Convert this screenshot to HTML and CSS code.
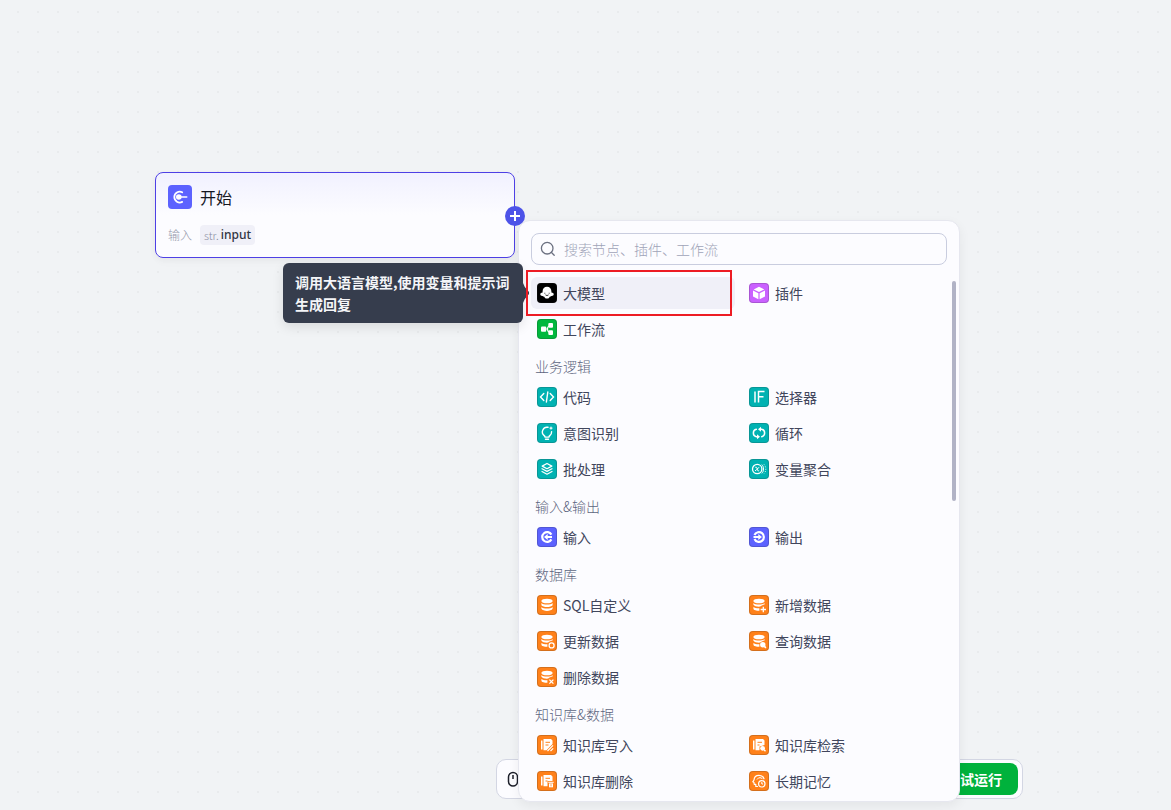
FILE: index.html
```html
<!DOCTYPE html>
<html lang="zh-CN">
<head>
<meta charset="utf-8">
<title>工作流</title>
<link rel="stylesheet" href="styles.css">
</head>
<body>
<svg class="defs" aria-hidden="true">
  <symbol id="db" viewBox="0 0 20 20">
    <ellipse cx="10" cy="6" rx="5.6" ry="2.3" fill="#fff"/>
    <path d="M4.4 8c1.600 2 9.600 2 11.200 0v2.200c-1.600 2.400-9.600 2.400-11.200 0zM4.400 12c1.600 2 9.600 2 11.200 0v1.800c-1.600 2.800-9.600 2.800-11.200 0z" fill="#fff"/>
  </symbol>
  <symbol id="db-part" viewBox="0 0 20 20">
    <ellipse cx="10" cy="6" rx="5.6" ry="2.3" fill="#fff"/>
    <path d="M4.400 8c1.600 2 9.600 2 11.200 0v1.600c-1.500.4-3.500.9-4.400 2-2.800.2-6-.3-6.800-1.800zM4.400 12c1 .9 3.600 1.300 6 1.200v2.600c-2.800 0-6-.6-6-2.400z" fill="#fff"/>
  </symbol>
</svg>
<main class="canvas">
  <section class="node">
    <header class="node-head">
      <span class="icon icon-large indigo"><svg viewBox="0 0 24 24"><path d="M14.200 16.900A5.400 5.400 0 1 1 14.200 7.300" fill="none" stroke="#fff" stroke-width="1.800" stroke-linecap="round"/><circle cx="10.800" cy="12" r="2.800" fill="#fff"/><path d="M11 12h7.700" stroke="#fff" stroke-width="1.600" stroke-linecap="round"/></svg></span>
      <h1 class="node-title">开始</h1>
    </header>
    <div class="node-row">
      <span class="node-label">输入</span>
      <span class="tag"><span class="tag-type">str.</span><span class="tag-name">input</span></span>
    </div>
    <button class="port" aria-label="添加节点"><svg viewBox="0 0 20 20"><path d="M10 5v10M5 10h10" stroke="#fff" stroke-width="2"/></svg></button>
  </section>

  <div class="toolbar">
    <button class="mouse-button" aria-label="鼠标"><svg viewBox="0 0 16 20"><rect x="3.500" y="3.500" width="9" height="13.500" rx="4.500" fill="none" stroke="#1c1f2a" stroke-width="1.500"/><path d="M8 6v4" stroke="#1c1f2a" stroke-width="1.500"/></svg></button>
    <button class="run-button">试运行</button>
  </div>

  <section class="panel">
    <label class="search">
      <svg viewBox="0 0 16 16"><circle cx="7.200" cy="7.200" r="5.800" fill="none" stroke="#6b7080" stroke-width="1.300"/><path d="M11.500 11.500l2.700 2.700" stroke="#6b7080" stroke-width="1.300" stroke-linecap="round"/></svg>
      <input type="text" placeholder="搜索节点、插件、工作流" aria-label="搜索">
    </label>
    <div class="list">
      <div class="grid">
        <button class="item active"><span class="icon black"><svg viewBox="0 0 20 20"><path d="M10 3.800c2.600 0 4.400 1.900 4.400 4.400v1.300c1.300.1 2.300.8 2.300 1.800s-1 1.700-2.300 1.600c-.5.500-1 .7-1.700.8-.4 1.200-1.300 1.900-2.700 1.900s-2.300-.7-2.700-1.900c-.7-.1-1.200-.3-1.700-.8-1.300.1-2.300-.6-2.300-1.600s1-1.700 2.300-1.800V8.200c0-2.500 1.800-4.400 4.400-4.400z" fill="#fff"/><path d="M7.800 9.800v.8M12.200 9.800v.8M8.500 11.900c.8.700 2.200.7 3 0" fill="none" stroke="#000" stroke-width=".9"/></svg></span>大模型</button>
        <button class="item"><span class="icon purple"><svg viewBox="0 0 20 20"><path d="M10 3.800l5.300 2.600L10 9 4.700 6.400zM4 7.500l5.400 2.700v6L4 13.500zM16 7.500l-5.400 2.700v6l5.400-2.700z" fill="#fff"/></svg></span>插件</button>
        <button class="item"><span class="icon green"><svg viewBox="0 0 20 20"><rect x="4" y="7.500" width="5.200" height="5.200" rx="1" fill="#fff"/><rect x="11.300" y="4" width="4.700" height="4.700" rx="1" fill="#fff"/><rect x="11.300" y="11.300" width="4.700" height="4.700" rx="1" fill="#fff"/><path d="M8 10h2.500M13 7c-2 0-2.500 1.200-2.500 3s.5 3.200 2.500 3.200" fill="none" stroke="#fff" stroke-width="1.100"/></svg></span>工作流</button>
      </div>
      <h2 class="group-title">业务逻辑</h2>
      <div class="grid">
        <button class="item"><span class="icon teal"><svg viewBox="0 0 20 20"><path d="M6.800 6.500L3.500 10l3.300 3.500M13.200 6.500l3.300 3.500-3.300 3.500M10.800 5l-1.400 10" fill="none" stroke="#fff" stroke-width="1.400" stroke-linecap="round"/></svg></span>代码</button>
        <button class="item"><span class="icon teal"><svg viewBox="0 0 20 20"><path d="M6 4.500v11M9.500 15.500v-11h6M9.500 9.700h5" fill="none" stroke="#fff" stroke-width="1.500"/></svg></span>选择器</button>
        <button class="item"><span class="icon teal"><svg viewBox="0 0 20 20"><path d="M11 4.300A4.700 4.700 0 0 0 7.200 12.600c.6.500.8 1 .9 1.500h3.800c.1-.5.300-1 .9-1.500a4.700 4.700 0 0 0 1.800-4M8.500 16.300h3" fill="none" stroke="#fff" stroke-width="1.400" stroke-linecap="round"/><path d="M14 3l.6 1.500 1.500.6-1.500.6-.6 1.500-.6-1.500-1.500-.6 1.500-.6z" fill="#fff"/></svg></span>意图识别</button>
        <button class="item"><span class="icon teal"><svg viewBox="0 0 20 20"><path d="M7.300 6.300a3.800 3.800 0 0 0 0 7.400h1.200M12.700 13.700a3.800 3.800 0 0 0 0-7.400h-1.200" fill="none" stroke="#fff" stroke-width="1.500" stroke-linecap="round"/><path d="M12 3.800v5L9 6.300zM8 11.200v5l3-2.500z" fill="#fff"/></svg></span>循环</button>
        <button class="item"><span class="icon teal"><svg viewBox="0 0 20 20"><path d="M10 4.500l4.800 2.600L10 9.700 5.200 7.100z" fill="none" stroke="#fff" stroke-width="1.300" stroke-linejoin="round"/><path d="M5 9.700l5 2.700 5-2.700M5 12.500l5 2.700 5-2.700" fill="none" stroke="#fff" stroke-width="1.200" stroke-linejoin="round" stroke-linecap="round"/></svg></span>批处理</button>
        <button class="item"><span class="icon teal"><svg viewBox="0 0 20 20"><circle cx="8.200" cy="10" r="4.700" fill="none" stroke="#fff" stroke-width="1.300"/><path d="M6.300 8.300c1.300-.4 1.600.2 1.900 1.700s.6 2.100 1.900 1.700M10.300 8.300c-1.300 0-2.700 3.400-4.200 3.400" fill="none" stroke="#fff" stroke-width="1"/><path d="M12.800 5.600c2.300 2.200 2.300 6.600 0 8.800" fill="none" stroke="#fff" stroke-width="1"/><path d="M15 5.400c2.400 2.400 2.400 6.800 0 9.200" fill="none" stroke="#fff" stroke-width=".9" stroke-dasharray="1 1.400"/></svg></span>变量聚合</button>
      </div>
      <h2 class="group-title">输入&amp;输出</h2>
      <div class="grid">
        <button class="item"><span class="icon indigo"><svg viewBox="0 0 20 20"><path d="M14.400 7.600a4.900 4.900 0 1 0 0 4.800" fill="none" stroke="#fff" stroke-width="2.200"/><path d="M7 10l3.700-3v2H15v2h-4.300v2z" fill="#fff"/></svg></span>输入</button>
        <button class="item"><span class="icon indigo"><svg viewBox="0 0 20 20"><path d="M5.500 8a4.900 4.900 0 1 1 0 4" fill="none" stroke="#fff" stroke-width="2.200"/><path d="M13 10L9.300 7v2H4.500v2h4.800v2z" fill="#fff"/></svg></span>输出</button>
      </div>
      <h2 class="group-title">数据库</h2>
      <div class="grid">
        <button class="item"><span class="icon orange"><svg viewBox="0 0 20 20"><use href="#db"/></svg></span>SQL自定义</button>
        <button class="item"><span class="icon orange"><svg viewBox="0 0 20 20"><use href="#db-part"/><path d="M14.300 11.800v5.400M11.600 14.500H17" stroke="#fff" stroke-width="1.300"/></svg></span>新增数据</button>
        <button class="item"><span class="icon orange"><svg viewBox="0 0 20 20"><use href="#db-part"/><circle cx="14.600" cy="14.400" r="2.500" fill="none" stroke="#fff" stroke-width="1.300"/></svg></span>更新数据</button>
        <button class="item"><span class="icon orange"><svg viewBox="0 0 20 20"><use href="#db-part"/><circle cx="13.800" cy="13.800" r="2.700" fill="#fff"/><path d="M15.400 15.400l1.500 1.500" stroke="#fff" stroke-width="1.500"/></svg></span>查询数据</button>
        <button class="item"><span class="icon orange"><svg viewBox="0 0 20 20"><use href="#db-part"/><path d="M12.400 12.600l4 4M16.400 12.600l-4 4" stroke="#fff" stroke-width="1.300"/></svg></span>删除数据</button>
      </div>
      <h2 class="group-title">知识库&amp;数据</h2>
      <div class="grid">
        <button class="item"><span class="icon orange"><svg viewBox="0 0 20 20"><path d="M4 5.500h1.500v9H4zM6.500 4h7.500l1.500 1.500V9l-6 6.200h-3z" fill="#fff"/><path d="M8.500 7.300h4.500M8.500 10h3" stroke="#ff811a" stroke-width="1"/><path d="M10.500 16l5.500-5.700M13.500 16l2.700-2.700" stroke="#fff" stroke-width="1.200"/></svg></span>知识库写入</button>
        <button class="item"><span class="icon orange"><svg viewBox="0 0 20 20"><path d="M4 5.500h1.500v9H4zM6.500 4h7.500l1.500 1.500V10l-5 1.500v3.700h-4z" fill="#fff"/><path d="M8.500 7.300h4.500M8.500 10h2" stroke="#ff811a" stroke-width="1"/><circle cx="13.600" cy="13.300" r="2.400" fill="#fff"/><path d="M15 14.700l1.500 1.500" stroke="#fff" stroke-width="1.400"/></svg></span>知识库检索</button>
        <button class="item"><span class="icon orange"><svg viewBox="0 0 20 20"><path d="M4 5.500h1.500v9H4zM6.500 4h7.500l1.500 1.500V10h-5v5.200h-4z" fill="#fff"/><path d="M8.500 7.300h4.500M8.500 10h2" stroke="#ff811a" stroke-width="1"/><path d="M11.300 11.300h5.400" stroke="#fff" stroke-width="1"/><path d="M12 12.400h4v3.900h-4z" fill="#fff"/><path d="M14 13.200v2.200" stroke="#ff811a" stroke-width=".8"/></svg></span>知识库删除</button>
        <button class="item"><span class="icon orange"><svg viewBox="0 0 20 20"><path d="M8.500 15.500H6.800v-2.200H5.200L5 11.500 3.800 10.800 5 9c.2-3 2.300-4.700 5-4.700 2.500 0 4.300 1.300 5 3.500" fill="none" stroke="#fff" stroke-width="1.200" stroke-linejoin="round" stroke-linecap="round"/><path d="M8 8.500l1.700-1.700h2.600l1 1.300" fill="none" stroke="#fff"/><circle cx="12.800" cy="12.800" r="3.200" fill="none" stroke="#fff" stroke-width="1.200"/><path d="M12.800 11v2h1.300" fill="none" stroke="#fff"/></svg></span>长期记忆</button>
      </div>
      <span class="scroll-thumb"></span>
    </div>
  </section>

  <div class="tooltip" role="tooltip">调用大语言模型,使用变量和提示词生成回复</div>
  <div class="highlight"></div>
</main>
</body>
</html>
```
FILE: styles.css
```css
* { box-sizing: border-box; }
body {
  margin: 0;
  font-family: "Noto Sans CJK SC", "Noto Sans", sans-serif;
  font-size: 14px;
  color: #41465c;
}
button { border: 0; padding: 0; background: none; font: inherit; color: inherit; }
svg { display: block; width: 100%; height: 100%; }
.defs { position: absolute; width: 0; height: 0; }

.canvas {
  position: relative;
  height: 100vh;
  overflow: hidden;
  background-color: #f1f3f5;
  background-image: radial-gradient(circle, #e9ebed 1px, transparent 1px);
  background-size: 20px 20px;
  background-position: 8px 2px;
}

.node {
  position: absolute;
  left: 155px;
  top: 172px;
  width: 360px;
  padding: 12px;
  border: 1px solid #4e40e5;
  border-radius: 8px;
  background: linear-gradient(#f1f1ff, #fcfcff 42px);
  box-shadow: 0 2px 6px rgba(0, 0, 0, .04), 0 4px 12px rgba(0, 0, 0, .02);
}
.node-head { display: flex; align-items: center; gap: 8px; }
.node-title { margin: 0; font-size: 16px; line-height: 24px; font-weight: 400; color: #15171f; }
.node-row { display: flex; align-items: center; gap: 8px; margin-top: 16px; font-size: 12px; line-height: 20px; }
.node-label { font-weight: 300; color: #9599ab; }
.tag { display: flex; gap: 2px; padding: 0 4px; border-radius: 4px; background: #f0f0f8; }
.tag-type { font-size: 11px; font-weight: 300; color: #888ca0; }
.tag-name { font-family: "Noto Sans", sans-serif; font-weight: 500; color: #303442; }
.port {
  position: absolute;
  right: -11px;
  top: 33px;
  width: 20px;
  height: 20px;
  border-radius: 50%;
  background: #4d53e8;
}

.icon { flex: none; width: 20px; height: 20px; border-radius: 4px; box-shadow: inset 0 0 0 1px rgba(40, 40, 40, .2); }
.icon-large { width: 24px; height: 24px; box-shadow: none; }
.indigo { background: #5c62ff; }
.black { background: #000; }
.purple { background: #ca61ff; }
.green { background: #00b83e; }
.teal { background: #00b2b2; }
.orange { background: #ff811a; }

.toolbar {
  position: absolute;
  left: 496px;
  bottom: 11px;
  width: 527px;
  display: flex;
  align-items: center;
  justify-content: space-between;
  padding: 3px 4px;
  border: 1px solid #d3d6e3;
  border-radius: 10px;
  background: #fcfcff;
}
.mouse-button { width: 24px; height: 24px; padding: 2px 4px; }
.run-button {
  padding: 0 16px;
  border-radius: 8px;
  line-height: 32px;
  font-weight: 600;
  color: #fff;
  background: #00b23c;
}

.panel {
  position: absolute;
  left: 518px;
  top: 220px;
  bottom: 8px;
  width: 442px;
  display: flex;
  flex-direction: column;
  gap: 12px;
  padding: 12px 12px 0;
  border: 1px solid #e6e7ef;
  border-radius: 12px;
  background: #fcfcff;
  box-shadow: 0 4px 12px rgba(0, 0, 0, .06);
}
.search {
  display: flex;
  align-items: center;
  gap: 8px;
  height: 32px;
  padding: 0 8px;
  border: 1px solid #c9cddf;
  border-radius: 8px;
}
.search svg { flex: none; width: 16px; height: 16px; }
.search input { flex: 1; min-width: 0; padding: 0; border: 0; outline: 0; background: none; font: inherit; line-height: 20px; }
.search input::placeholder { font-weight: 300; color: #a0a4b8; }
.list { position: relative; flex: 1; min-height: 0; }
.grid { display: grid; grid-template-columns: 1fr 1fr; gap: 4px 8px; }
.item {
  display: flex;
  align-items: center;
  gap: 6px;
  height: 32px;
  padding: 0 6px;
  border-radius: 6px;
  line-height: 20px;
}
.active { background: #f0f0f8; }
.group-title { margin: 11px 4px 5px; font-size: 14px; line-height: 20px; font-weight: 300; color: #5d657e; }
.scroll-thumb {
  position: absolute;
  right: -9px;
  top: 4px;
  width: 4px;
  height: 42%;
  border-radius: 2px;
  background: #b1b3c6;
}

.tooltip {
  position: absolute;
  left: 283px;
  top: 263px;
  width: 240px;
  padding: 8px 12px;
  border-radius: 6px;
  line-height: 22px;
  font-weight: 600;
  color: #f4f5f8;
  background: #363d4d;
  box-shadow: 0 4px 12px rgba(0, 0, 0, .1);
}
.tooltip::after {
  content: "";
  position: absolute;
  left: 100%;
  top: 20px;
  width: 6px;
  height: 20px;
  background: #363d4d;
  clip-path: polygon(0 0, 30% 20%, 100% 45%, 100% 55%, 30% 80%, 0 100%);
}
.highlight {
  position: absolute;
  left: 526px;
  top: 270px;
  width: 206px;
  height: 46px;
  border: 2px solid #ed1c24;
  pointer-events: none;
}
```
